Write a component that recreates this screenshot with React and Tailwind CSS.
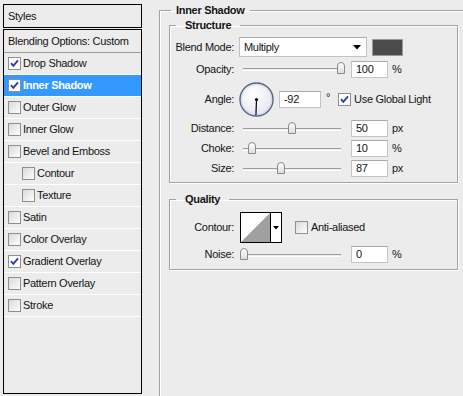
import React from 'react';

const styleRows = [
  { name: 'Drop Shadow', checked: true },
  { name: 'Inner Shadow', checked: true, active: true },
  { name: 'Outer Glow' },
  { name: 'Inner Glow' },
  { name: 'Bevel and Emboss' },
  { name: 'Contour', indent: true },
  { name: 'Texture', indent: true },
  { name: 'Satin' },
  { name: 'Color Overlay' },
  { name: 'Gradient Overlay', checked: true },
  { name: 'Pattern Overlay' },
  { name: 'Stroke' },
];

const CheckBox = ({ checked }) => (
  <svg width="13" height="13" viewBox="0 0 13 13" className="flex-none">
    <defs>
      <linearGradient id="cbfill" x1="0" y1="0" x2="1" y2="1">
        <stop offset="0" stopColor="#d8d8d4" />
        <stop offset="1" stopColor="#ffffff" />
      </linearGradient>
    </defs>
    <rect x="0.5" y="0.5" width="12" height="12" fill={checked ? '#ffffff' : 'url(#cbfill)'} stroke="#8e8f8f" />
    {checked && <path d="M3 6.2 L5.3 8.8 L10 3.3" fill="none" stroke="#2a3aa0" strokeWidth="1.8" />}
  </svg>
);

const Slider = ({ pos }) => (
  <div className="relative ml-[4px] w-[98px] h-[2px] border-t border-[#9c9c9c] shadow-[0_1px_0_#fff]">
    <div
      className="absolute top-[-7px] w-[8px] h-[12px] rounded-t-full rounded-b-[2px] border border-[#8a8a8a] bg-gradient-to-b from-white to-[#dedede]"
      style={{ left: pos }}
    />
  </div>
);

const NumBox = ({ value, w = 'w-[37px]' }) => (
  <div className={`${w} h-[17px] bg-white border border-[#c4c4c4] border-t-[#a9a9a9] pl-[4px] flex items-center`}>
    {value}
  </div>
);

const Label = ({ children }) => <div className="w-[64px] text-right flex-none">{children}</div>;

const SliderRow = ({ label, pos, value, unit, mt }) => (
  <div className={`flex items-center h-[17px] ${mt}`}>
    <Label>{label}</Label>
    <div className="ml-[5px]"><Slider pos={pos} /></div>
    <div className="ml-[10px]"><NumBox value={value} /></div>
    <div className="ml-[4px]">{unit}</div>
  </div>
);

const Dial = () => (
  <svg width="35" height="35" viewBox="0 0 35 35" className="flex-none">
    <defs>
      <radialGradient id="dialfill" cx="0.4" cy="0.35" r="0.7">
        <stop offset="0" stopColor="#ffffff" />
        <stop offset="1" stopColor="#e4e6ec" />
      </radialGradient>
    </defs>
    <circle cx="17.5" cy="17.5" r="16.5" fill="url(#dialfill)" stroke="#56648a" strokeWidth="1.4" />
    <circle cx="17.5" cy="17.5" r="15.2" fill="none" stroke="#c9cedb" strokeWidth="0.8" />
    <line x1="17.5" y1="17.5" x2="16.95" y2="33" stroke="#000" strokeWidth="1.2" />
    <circle cx="17.5" cy="17.5" r="1.6" fill="#000" />
  </svg>
);

export default function App() {
  return (
    <div className="w-[463px] h-[396px] overflow-hidden bg-[#ececec] flex items-start font-['Liberation_Sans',Arial,sans-serif] text-[11px] tracking-[-0.3px] text-[#141414] leading-[13px]">
      {/* styles list */}
      <div className="ml-[3px] mt-[4px] w-[139px] flex-none flex flex-col">
        <div className="h-[24px] border border-black flex items-center pl-[4px]">Styles</div>
        <div className="mt-[1px] h-[365px] border border-black flex flex-col">
          <div className="h-[23px] flex-none border-b border-[#9a9a9a] flex items-center pl-[4px]">Blending Options: Custom</div>
          {styleRows.map(row => (
            <div
              key={row.name}
              className={`h-[22px] flex-none border-b border-white flex items-center gap-[2px] ${row.indent ? 'pl-[18px]' : 'pl-[4px]'} ${row.active ? 'bg-[#3399ff] text-white font-bold' : ''}`}
            >
              <CheckBox checked={row.checked} />
              <span>{row.name}</span>
            </div>
          ))}
        </div>
      </div>

      {/* settings */}
      <fieldset className="ml-[17px] mt-[4px] w-[330px] h-[400px] flex-none border border-[#a3a3a3] shadow-[inset_1px_1px_0_#fff]">
        <legend className="ml-[11px] px-[5px] font-bold">Inner Shadow</legend>

        <fieldset className="ml-[9px] mt-[2px] w-[289px] pb-[5px] border border-[#a3a3a3] shadow-[inset_1px_1px_0_#fff,1px_1px_0_#fff]">
          <legend className="ml-[6px] px-[9px] font-bold">Structure</legend>

          <div className="flex items-center h-[20px] mt-[5px]">
            <Label>Blend Mode:</Label>
            <div className="ml-[5px] w-[128px] h-[20px] bg-white border border-[#c2c2c2] border-t-[#a9a9a9] flex items-center justify-between pl-[4px] pr-[5px]">
              <span>Multiply</span>
              <svg width="8" height="5" viewBox="0 0 8 5"><path d="M0 0 H8 L4 4.5 Z" fill="#000" /></svg>
            </div>
            <div className="ml-[5px] w-[31px] h-[17px] bg-[#4b4b4b] border border-[#9a9a9a]" />
          </div>

          <div className="flex items-center h-[18px] mt-[3px]">
            <Label>Opacity:</Label>
            <div className="ml-[5px]"><Slider pos={94} /></div>
            <div className="ml-[10px]"><NumBox value="100" /></div>
            <div className="ml-[4px]">%</div>
          </div>

          <div className="flex items-center h-[37px] mt-[3px]">
            <Label>Angle:</Label>
            <div className="ml-[5px]"><Dial /></div>
            <div className="ml-[5px]"><NumBox value="-92" w="w-[42px]" /></div>
            <div className="ml-[5px] self-start mt-[10px]">°</div>
            <div className="ml-[8px] flex items-center gap-[3px]">
              <CheckBox checked />
              <span>Use Global Light</span>
            </div>
          </div>

          <SliderRow label="Distance:" pos={45} value="50" unit="px" mt="mt-[2px]" />
          <SliderRow label="Choke:" pos={5} value="10" unit="%" mt="mt-[3px]" />
          <SliderRow label="Size:" pos={34} value="87" unit="px" mt="mt-[3px]" />
        </fieldset>

        <fieldset className="ml-[9px] mt-[10px] w-[289px] pb-[6px] border border-[#a3a3a3] shadow-[inset_1px_1px_0_#fff,1px_1px_0_#fff]">
          <legend className="ml-[6px] px-[9px] font-bold">Quality</legend>

          <div className="flex items-center h-[31px] mt-[6px]">
            <Label>Contour:</Label>
            <div className="ml-[6px] w-[42px] h-[31px] border border-black bg-white flex">
              <svg width="29" height="29" viewBox="0 0 29 29" className="flex-none">
                <rect x="0" y="0" width="29" height="29" fill="#fff" />
                <path d="M29 0 V29 H0 Z" fill="#a0a0a0" />
              </svg>
              <div className="w-px bg-black" />
              <div className="flex-1 flex items-center justify-center">
                <svg width="6" height="4" viewBox="0 0 6 4"><path d="M0 0 H6 L3 3.5 Z" fill="#000" /></svg>
              </div>
            </div>
            <div className="ml-[13px] flex items-center gap-[3px]">
              <CheckBox />
              <span>Anti-aliased</span>
            </div>
          </div>

          <div className="flex items-center h-[17px] mt-[3px]">
            <Label>Noise:</Label>
            <div className="ml-[5px]"><Slider pos={-3} /></div>
            <div className="ml-[10px]"><NumBox value="0" /></div>
            <div className="ml-[4px]">%</div>
          </div>
        </fieldset>
      </fieldset>
    </div>
  );
}
